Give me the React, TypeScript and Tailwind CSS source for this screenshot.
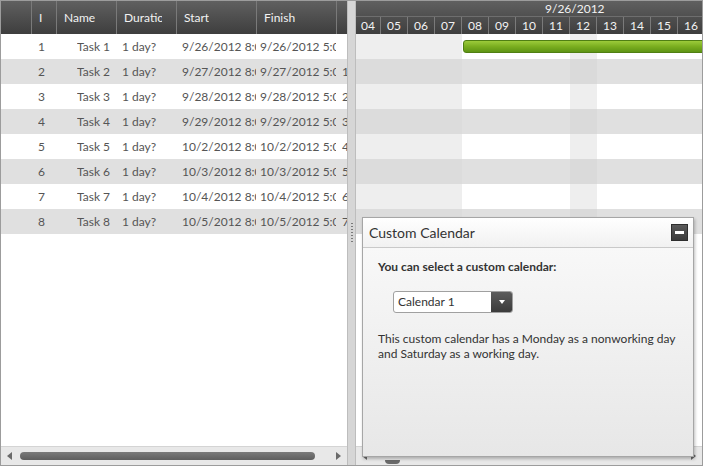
import React from "react";

const tasks = [
  { id: 1, start: "9/26/2012 8:00 AM", finish: "9/26/2012 5:00 PM", pred: "" },
  { id: 2, start: "9/27/2012 8:00 AM", finish: "9/27/2012 5:00 PM", pred: "1" },
  { id: 3, start: "9/28/2012 8:00 AM", finish: "9/28/2012 5:00 PM", pred: "2" },
  { id: 4, start: "9/29/2012 8:00 AM", finish: "9/29/2012 5:00 PM", pred: "3" },
  { id: 5, start: "10/2/2012 8:00 AM", finish: "10/2/2012 5:00 PM", pred: "4" },
  { id: 6, start: "10/3/2012 8:00 AM", finish: "10/3/2012 5:00 PM", pred: "5" },
  { id: 7, start: "10/4/2012 8:00 AM", finish: "10/4/2012 5:00 PM", pred: "6" },
  { id: 8, start: "10/5/2012 8:00 AM", finish: "10/5/2012 5:00 PM", pred: "7" },
];

const hours = ["04", "05", "06", "07", "08", "09", "10", "11", "12", "13", "14", "15", "16"];

function ScrollBar({ thumb }: { thumb: "wide" | "small" }) {
  return (
    <div className="flex h-[19px] shrink-0 items-center border-t border-[#d4d4d4] bg-[#e8e8e8] px-[6px]">
      <div className="h-0 w-0 border-y-[4px] border-r-[5px] border-y-transparent border-r-[#6a6a6a]" />
      {thumb === "wide" ? (
        <div className="ml-[8px] mr-[21px] h-[8px] flex-1 rounded-full bg-gradient-to-b from-[#7a7a7a] to-[#5e5e5e]" />
      ) : (
        <div className="flex flex-1 items-end self-stretch pb-[1px]">
          <div className="ml-[18px] h-[4px] w-[15px] rounded-b bg-[#6a6a6a]" />
        </div>
      )}
      <div className="h-0 w-0 border-y-[4px] border-l-[5px] border-y-transparent border-l-[#6a6a6a]" />
    </div>
  );
}

function Cell({ w, pl, pr = "pr-[4px]", children }: { w: string; pl: string; pr?: string; children?: React.ReactNode }) {
  return (
    <div className={`${w} ${pl} ${pr} shrink-0`}>
      <div className="overflow-hidden whitespace-nowrap">{children}</div>
    </div>
  );
}

export default function App() {
  const cols = [
    { title: "", w: "w-[31px]" },
    { title: "I", w: "w-[25px]" },
    { title: "Name", w: "w-[60px]" },
    { title: "Duration", w: "w-[60px]" },
    { title: "Start", w: "w-[80px]" },
    { title: "Finish", w: "w-[80px]" },
    { title: "", w: "w-[10px]" },
  ];

  return (
    <div
      className="relative flex h-[466px] w-[703px] overflow-hidden border border-[#9c9c9c] bg-white text-[12px] text-[#555555]"
      style={{ fontFamily: "Lato, 'Open Sans', sans-serif" }}
    >
      {/* ================= GRID ================= */}

      <div className="flex w-[346px] shrink-0 flex-col">
        <div className="flex h-[33px] shrink-0 bg-gradient-to-b from-[#606060] to-[#3e3e3e] text-[#f2f2f2]">
          {cols.map((c, i) => (
            <div
              key={i}
              className={`${c.w} flex shrink-0 items-center border-r border-[#7a7a7a] pl-[7px] pr-[14px]`}
            >
              <div className="overflow-hidden whitespace-nowrap">{c.title}</div>
            </div>
          ))}
        </div>

        {tasks.map((t, i) => (
          <div
            key={t.id}
            className={`flex h-[25px] shrink-0 items-center ${i % 2 ? "bg-[#e0e0e0]" : "bg-white"}`}
          >
            <div className="w-[31px] shrink-0" />
            <Cell w="w-[25px]" pl="pl-[6px]">{t.id}</Cell>
            <Cell w="w-[60px]" pl="pl-[20px]">Task {t.id}</Cell>
            <Cell w="w-[60px]" pl="pl-[5px]">1 day?</Cell>
            <Cell w="w-[80px]" pl="pl-[5px]" pr="pr-[1px]">{t.start}</Cell>
            <Cell w="w-[80px]" pl="pl-[3px]" pr="pr-[1px]">{t.finish}</Cell>
            <Cell w="w-[10px]" pl="pl-[5px]" pr="pr-0">{t.pred}</Cell>
          </div>
        ))}

        <div className="flex-1" />
        <ScrollBar thumb="wide" />
      </div>

      {/* ================= SPLITTER ================= */}

      <div className="flex w-[9px] shrink-0 flex-col items-center border-x border-[#bdbdbd] bg-[#d6d6d6] pt-[222px]">
        <div className="flex flex-col gap-[2px]">
          {Array.from({ length: 7 }).map((_, i) => (
            <div key={i} className="h-[1px] w-[2px] bg-[#7a7a7a]" />
          ))}
        </div>
      </div>

      {/* ================= GANTT ================= */}

      <div className="flex min-w-0 flex-1 flex-col">
        <div className="flex h-[33px] shrink-0 flex-col bg-gradient-to-b from-[#606060] to-[#3e3e3e] text-[#f2f2f2]">
          <div className="flex h-[16px] items-center border-b border-[#6e6e6e] pl-[189px] text-[12px]">
            9/26/2012
          </div>
          <div className="flex flex-1 text-[12px]">
            {hours.map((h, i) => (
              <div
                key={h}
                className={`flex shrink-0 items-center justify-center border-r border-[#7a7a7a] ${
                  i === 0 ? "w-[25px]" : "w-[27px]"
                }`}
              >
                {h}
              </div>
            ))}
          </div>
        </div>

        {tasks.map((t, i) => (
          <div
            key={t.id}
            className={`relative flex h-[25px] shrink-0 ${i % 2 ? "bg-[#e0e0e0]" : "bg-white"}`}
          >
            <div className={`w-[106px] shrink-0 ${i % 2 ? "bg-[#dcdcdc]" : "bg-[#eeeeee]"}`} />
            <div className="w-[108px] shrink-0" />
            <div className={`w-[27px] shrink-0 ${i % 2 ? "bg-[#dadada]" : "bg-[#eeeeee]"}`} />
            {i === 0 && (
              <div className="absolute left-[107px] top-[6px] h-[13px] w-[260px] rounded-l-[3px] border border-[#4f7f12] bg-gradient-to-b from-[#9ccb3a] via-[#7aae1f] to-[#5e9414]" />
            )}
          </div>
        ))}

        <div className="flex-1 bg-white" />
        <ScrollBar thumb="small" />
      </div>

      {/* ================= CUSTOM CALENDAR PANEL ================= */}

      <div className="absolute left-[361px] top-[216px] flex h-[240px] w-[332px] flex-col border border-[#a6a6a6] shadow-[1px_2px_3px_rgba(0,0,0,0.25)]">
        <div className="flex h-[30px] shrink-0 items-center justify-between border-b border-[#c9c9c9] bg-gradient-to-b from-white to-[#f1f1f1] pl-[6px] pr-[5px]">
          <span className="text-[14px] text-[#333333]">Custom Calendar</span>
          <div className="flex h-[17px] w-[17px] items-center justify-center border border-[#2e2e2e] bg-gradient-to-b from-[#5a5a5a] to-[#3a3a3a]">
            <div className="h-[3px] w-[9px] bg-white" />
          </div>
        </div>

        <div className="flex flex-1 flex-col bg-gradient-to-b from-[#f8f8f8] to-[#e7e7e7] px-[15px] pt-[10px] text-[#333333]">
          <div className="text-[12px] font-bold">You can select a custom calendar:</div>

          <div className="ml-[15px] mt-[15px] flex h-[22px] w-[120px] overflow-hidden rounded-[3px] border border-[#a0a0a0] bg-white">
            <div className="flex flex-1 items-center pl-[4px] text-[12px]">Calendar 1</div>
            <div className="flex w-[21px] items-center justify-center bg-gradient-to-b from-[#5c5c5c] to-[#3b3b3b]">
              <div className="h-0 w-0 border-x-[3px] border-t-[4px] border-x-transparent border-t-white" />
            </div>
          </div>

          <p className="mt-[18px] text-[12px] leading-[15px]">
            This custom calendar has a Monday as a nonworking day and Saturday as a working day.
          </p>
        </div>
      </div>
    </div>
  );
}
